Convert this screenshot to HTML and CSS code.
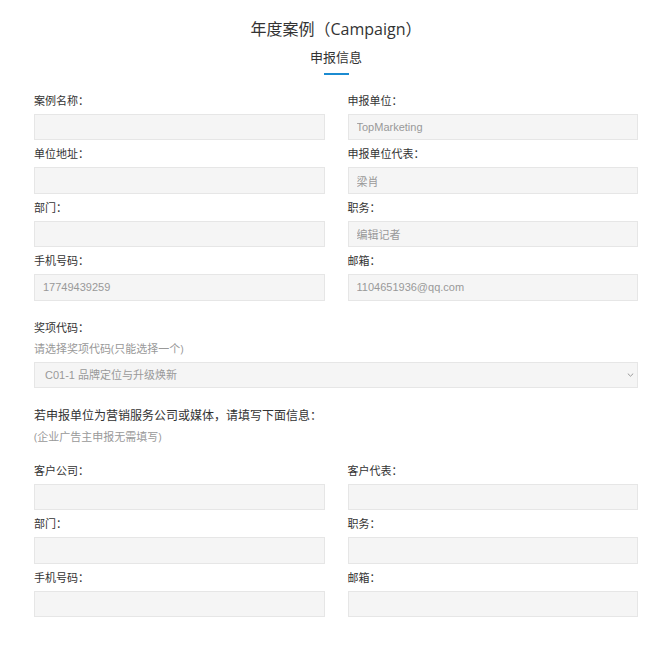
FILE: index.html
```html
<!DOCTYPE html>
<html lang="zh-CN">

<head>
    <meta charset="UTF-8">
    <meta name="viewport" content="width=device-width, initial-scale=1.0">
    <title>年度案例（Campaign）- 申报信息</title>
    <link rel="stylesheet" href="styles.css">
</head>

<body>
    <main class="page">
        <!-- ====> heading -->
        <div class="head">
            <h1>年度案例（Campaign）</h1>
            <h2>申报信息</h2>
            <span class="bar"></span>
        </div>

        <!-- ====> applicant info -->
        <form class="apply" action="">
            <div class="grid">
                <div class="field">
                    <label>案例名称：</label>
                    <input type="text">
                </div>
                <div class="field">
                    <label>申报单位：</label>
                    <input type="text" value="TopMarketing">
                </div>
                <div class="field">
                    <label>单位地址：</label>
                    <input type="text">
                </div>
                <div class="field">
                    <label>申报单位代表：</label>
                    <input type="text" value="梁肖">
                </div>
                <div class="field">
                    <label>部门：</label>
                    <input type="text">
                </div>
                <div class="field">
                    <label>职务：</label>
                    <input type="text" value="编辑记者">
                </div>
                <div class="field">
                    <label>手机号码：</label>
                    <input type="text" value="17749439259">
                </div>
                <div class="field">
                    <label>邮箱：</label>
                    <input type="text" value="1104651936@qq.com">
                </div>
            </div>

            <!-- ====> award code -->
            <div class="award">
                <label>奖项代码：</label>
                <p class="hint">请选择奖项代码(只能选择一个)</p>
                <div class="select-wrap">
                    <select>
                        <option>C01-1 品牌定位与升级焕新</option>
                    </select>
                    <svg class="arrow" width="7" height="4" viewBox="0 0 7 4">
                        <path d="M0.8 0.6l2.7 2.6 2.7-2.6" fill="none" stroke="#999" stroke-width="1" />
                    </svg>
                </div>
            </div>

            <!-- ====> client info -->
            <div class="client">
                <h3>若申报单位为营销服务公司或媒体，请填写下面信息：</h3>
                <p class="hint">(企业广告主申报无需填写)</p>
            </div>

            <div class="grid">
                <div class="field">
                    <label>客户公司：</label>
                    <input type="text">
                </div>
                <div class="field">
                    <label>客户代表：</label>
                    <input type="text">
                </div>
                <div class="field">
                    <label>部门：</label>
                    <input type="text">
                </div>
                <div class="field">
                    <label>职务：</label>
                    <input type="text">
                </div>
                <div class="field">
                    <label>手机号码：</label>
                    <input type="text">
                </div>
                <div class="field">
                    <label>邮箱：</label>
                    <input type="text">
                </div>
            </div>
        </form>
    </main>
</body>

</html>
```

FILE: styles.css
```css
* {
    padding: 0;
    margin: 0;
    box-sizing: border-box;
}

body {
    font-family: "Open Sans", "Noto Sans CJK SC", sans-serif;
    color: #333;
    background: #fff;
}

.page {
    padding: 17px 32px 30px 34px;
}

.head {
    display: flex;
    flex-direction: column;
    align-items: center;
}

.head h1 {
    font-size: 16px;
    font-weight: 400;
    line-height: 24px;
    color: #333;
}

.head h2 {
    margin-top: 6px;
    font-size: 13px;
    font-weight: 400;
    line-height: 20px;
    color: #333;
}

.head .bar {
    display: block;
    margin-top: 6px;
    width: 25px;
    height: 2px;
    background: #1b8bd1;
}

.apply {
    margin-top: 16px;
}

.grid {
    display: grid;
    grid-template-columns: 1fr 1fr;
    column-gap: 23px;
}

.field {
    display: flex;
    flex-direction: column;
    margin-bottom: 4px;
}

label {
    display: block;
    font-size: 11px;
    line-height: 20px;
    color: #333;
}

.field label {
    margin-bottom: 3px;
}

input,
select {
    width: 100%;
    height: 26.4px;
    background: #f5f5f5;
    border: 1px solid #e6e6e6;
    font-family: "Liberation Sans", "Noto Sans CJK SC", sans-serif;
    font-size: 11px;
    color: #999;
    outline: none;
}

input {
    padding: 0 8px;
}

.award {
    margin-top: 13px;
}

.hint {
    font-size: 11px;
    line-height: 20px;
    color: #999;
}

.award .hint {
    margin: 1px 0 3px;
}

.select-wrap {
    position: relative;
}

select {
    appearance: none;
    padding: 0 10px;
}

.select-wrap .arrow {
    position: absolute;
    right: 4px;
    top: 11px;
}

.client {
    margin-top: 18px;
    margin-bottom: 14px;
}

.client h3 {
    font-size: 12px;
    font-weight: 400;
    line-height: 20px;
    color: #333;
}

.client .hint {
    margin-top: 1px;
}
```
